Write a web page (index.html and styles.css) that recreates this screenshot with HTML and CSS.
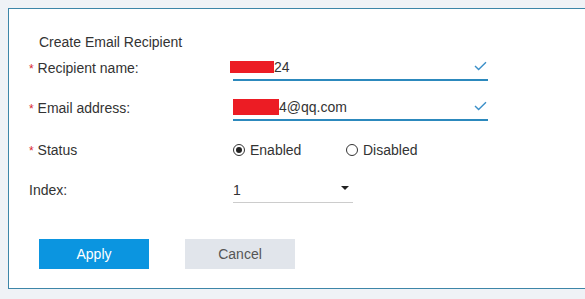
FILE: index.html
```html
<!DOCTYPE html>
<html lang="en">
<head>
  <meta charset="UTF-8">
  <title>Create Email Recipient</title>
  <link rel="stylesheet" href="styles.css">
</head>
<body>
  <div class="panel">
    <h2 class="panel-title">Create Email Recipient</h2>

    <form class="recipient-form">
      <div class="form-row">
        <label class="form-label"><span class="req">*</span> Recipient name:</label>
        <div class="text-field">
          <span class="value"><span class="redact redact-name"></span>24</span>
          <svg class="check" width="13" height="10" viewBox="0 0 13 10">
            <path d="M1 5 L4.6 8.6 L12 1.2" fill="none" stroke="#3b8fc8" stroke-width="1.4"/>
          </svg>
        </div>
      </div>

      <div class="form-row">
        <label class="form-label"><span class="req">*</span> Email address:</label>
        <div class="text-field">
          <span class="value"><span class="redact redact-email"></span>4@qq.com</span>
          <svg class="check" width="13" height="10" viewBox="0 0 13 10">
            <path d="M1 5 L4.6 8.6 L12 1.2" fill="none" stroke="#3b8fc8" stroke-width="1.4"/>
          </svg>
        </div>
      </div>

      <div class="form-row row-status">
        <label class="form-label"><span class="req">*</span> Status</label>
        <div class="radio-group">
          <span class="radio-option"><span class="radio checked"></span>Enabled</span>
          <span class="radio-option"><span class="radio"></span>Disabled</span>
        </div>
      </div>

      <div class="form-row">
        <label class="form-label">Index:</label>
        <div class="select-field">
          <span class="value">1</span>
          <span class="caret"></span>
        </div>
      </div>

      <div class="actions">
        <button type="button" class="btn btn-primary">Apply</button>
        <button type="button" class="btn btn-default">Cancel</button>
      </div>
    </form>
  </div>
</body>
</html>
```

FILE: styles.css
```css
body {
  font-family: 'Liberation Sans', Arial, sans-serif;
  font-size: 14px;
  color: #333;
  background-color: #eff2f6;
  margin: 0;
  padding: 8px 0 0 8px;
  overflow: hidden;
}

.panel {
  background: #fff;
  border: 1px solid #3d86a8;
  border-right: none;
  padding: 25px 0 19px 20px;
}

.panel-title {
  font-size: 14px;
  font-weight: normal;
  line-height: 16px;
  margin: 0 0 -2px 10px;
}

.form-row {
  display: flex;
  align-items: center;
  height: 40px;
}

.row-status {
  margin-top: 2px;
}

.form-label {
  width: 204px;
  flex-shrink: 0;
}

.req {
  color: #d9272e;
  font-size: 12px;
}

.text-field {
  width: 255px;
  height: 26px;
  box-sizing: border-box;
  border-bottom: 2px solid #2c89bd;
  display: flex;
  align-items: center;
  justify-content: space-between;
  padding-right: 1px;
}

.value {
  display: flex;
  align-items: center;
}

.redact {
  display: inline-block;
  background: #ec1c24;
}

.redact-name {
  width: 44px;
  height: 12px;
  margin-left: -3px;
}

.redact-email {
  width: 46px;
  height: 16px;
}

.check {
  margin-top: -2px;
}

.radio-group {
  display: flex;
}

.radio-option {
  display: flex;
  align-items: center;
  width: 113px;
}

.radio {
  width: 10px;
  height: 10px;
  border: 1px solid #333;
  border-radius: 50%;
  margin-right: 5px;
  position: relative;
}

.radio.checked::after {
  content: "";
  position: absolute;
  left: 2px;
  top: 2px;
  width: 6px;
  height: 6px;
  border-radius: 50%;
  background: #222;
}

.select-field {
  width: 120px;
  height: 26px;
  box-sizing: border-box;
  border-bottom: 1px solid #ccc;
  display: flex;
  align-items: center;
  justify-content: space-between;
}

.caret {
  width: 0;
  height: 0;
  border-left: 4px solid transparent;
  border-right: 4px solid transparent;
  border-top: 4px solid #222;
  margin: 0 4px 4px 0;
}

.actions {
  display: flex;
  gap: 36px;
  margin: 29px 0 0 10px;
}

.btn {
  width: 110px;
  height: 30px;
  border: none;
  font-family: inherit;
  font-size: 14px;
  cursor: pointer;
}

.btn-primary {
  background-color: #0b95e0;
  color: #fff;
}

.btn-default {
  background-color: #e1e5eb;
  color: #555;
}
```
